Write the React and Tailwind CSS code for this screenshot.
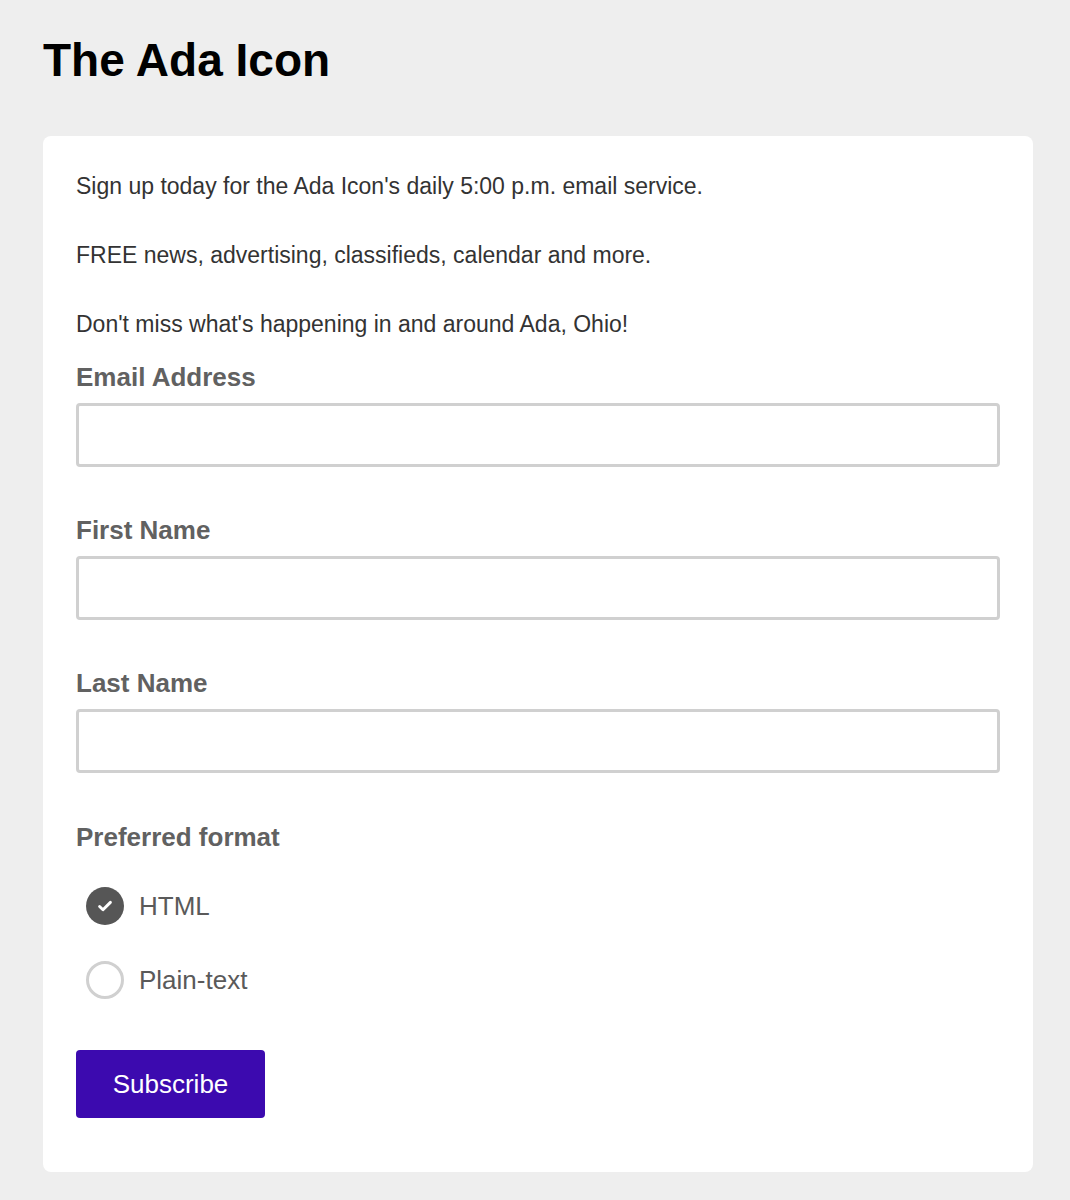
import { useState } from 'react';

const font = { fontFamily: '"Liberation Sans", Arial, Helvetica, sans-serif' };

const Field = ({ label, first }) => (
  <div className={first ? 'mt-[23px]' : 'mt-[48px]'}>
    <label className="block text-[26px] leading-[30px] font-bold text-[#616161]">{label}</label>
    <input
      type="text"
      className="mt-[11px] block w-full h-[64px] border-[3px] border-[#d0d0d0] rounded-[4px] bg-white px-3 text-[22px] outline-none"
    />
  </div>
);

const Radio = ({ checked, label, onClick }) => (
  <button type="button" onClick={onClick} className="flex items-center h-[38px] pl-[10px] gap-[15px]">
    {checked ? (
      <span className="w-[38px] h-[38px] rounded-full bg-[#565656] flex items-center justify-center">
        <svg width="18" height="18" viewBox="0 0 16 16" fill="none">
          <path d="M3.2 8.4l3 2.9L12.8 4.8" stroke="white" strokeWidth="2.6" strokeLinecap="round" strokeLinejoin="round" />
        </svg>
      </span>
    ) : (
      <span className="w-[38px] h-[38px] rounded-full border-[3px] border-[#d0d0d0] bg-white" />
    )}
    <span className="text-[26px] leading-[30px] text-[#5a5a5a]">{label}</span>
  </button>
);

export default function App() {
  const [format, setFormat] = useState('html');

  return (
    <div className="min-h-[1200px] bg-[#eeeeee] pt-[33px] pb-[28px]" style={font}>
      <h1 className="ml-[43px] text-[46px] leading-[55px] font-bold text-black">The Ada Icon</h1>

      <div className="mt-[48px] ml-[43px] w-[990px] bg-white rounded-[8px] px-[33px] pt-[35px] pb-[54px]">
        <div className="flex flex-col gap-[39px] text-[23px] leading-[30px] text-[#333333]">
          <p>Sign up today for the Ada Icon's daily 5:00 p.m. email service.</p>
          <p>FREE news, advertising, classifieds, calendar and more.</p>
          <p>Don't miss what's happening in and around Ada, Ohio!</p>
        </div>

        <Field label="Email Address" first />
        <Field label="First Name" />
        <Field label="Last Name" />

        <div className="mt-[49px]">
          <p className="text-[26px] leading-[30px] font-bold text-[#616161]">Preferred format</p>
          <div className="mt-[35px] flex flex-col gap-[36px]">
            <Radio checked={format === 'html'} label="HTML" onClick={() => setFormat('html')} />
            <Radio checked={format === 'text'} label="Plain-text" onClick={() => setFormat('text')} />
          </div>
        </div>

        <button
          type="button"
          className="mt-[51px] h-[68px] w-[189px] rounded-[4px] bg-[#3c0aaf] text-white text-[26px]"
        >
          Subscribe
        </button>
      </div>
    </div>
  );
}
